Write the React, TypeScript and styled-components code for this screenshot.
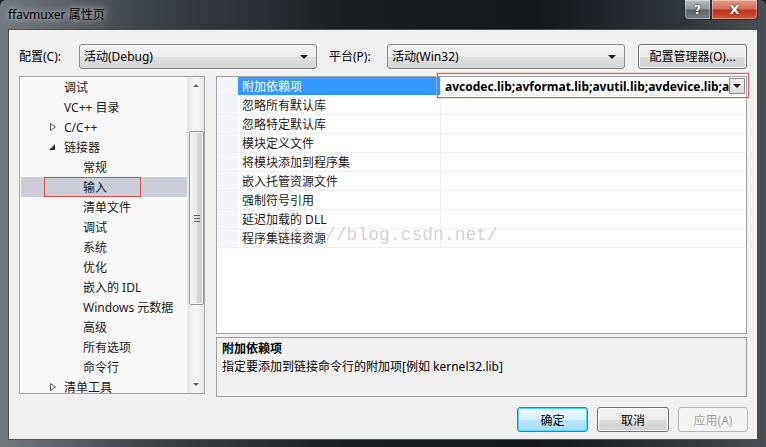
import React from 'react';
import styled, { createGlobalStyle } from 'styled-components';

const GlobalStyle = createGlobalStyle`
  html, body {
    margin: 0;
    padding: 0;
    background: #1c1f22;
    overflow: hidden;
  }
  * {
    box-sizing: border-box;
  }
`;

const UI_FONT = `"Noto Sans", "Noto Sans CJK SC", sans-serif`;

const Window = styled.div`
  position: relative;
  width: 766px;
  height: 447px;
  display: flex;
  flex-direction: column;
  font-family: ${UI_FONT};
  font-size: 12px;
  color: #000;
  background: linear-gradient(90deg, #737a80 0%, #41464b 18%, #1b1d20 45%, #15171a 70%, #2e3337 88%, #4a5055 100%);
  border-radius: 6px 6px 0 0;
  overflow: hidden;
`;

const TitleBar = styled.div`
  height: 29px;
  flex: none;
  display: flex;
  align-items: center;
  padding: 0 0 2px 8px;
`;

const TitleText = styled.span`
  font-size: 12px;
  color: #000;
  text-shadow: 0 0 6px #c8ccd0, 0 0 10px #b0b5ba;
`;

const TitleButtons = styled.div`
  position: absolute;
  top: 0;
  right: 8px;
  display: flex;
`;

const CaptionButton = styled.div<{ $close?: boolean }>`
  width: ${(p) => (p.$close ? '47px' : '27px')};
  height: 20px;
  display: flex;
  align-items: center;
  justify-content: center;
  color: #fff;
  font-family: "DejaVu Sans", sans-serif;
  font-weight: bold;
  font-size: ${(p) => (p.$close ? '13px' : '12px')};
  text-shadow: 0 0 2px #000;
  border: 1px solid #2a2e32;
  border-top: none;
  border-radius: ${(p) => (p.$close ? '0 0 5px 0' : '0 0 0 5px')};
  box-shadow: inset 0 0 0 1px rgba(255, 255, 255, 0.35);
  background: ${(p) =>
    p.$close
      ? 'linear-gradient(180deg, #e39b8b 0%, #d4705b 45%, #c0341f 55%, #d4553c 100%)'
      : 'linear-gradient(180deg, #b7bcc1 0%, #8f959a 45%, #5c6267 55%, #7c8287 100%)'};
`;

const Client = styled.div`
  flex: 1;
  margin: 0 8px 7px 8px;
  background: #f0f0f0;
  border: 1px solid #4b5054;
  display: flex;
  flex-direction: column;
  padding: 13px 10px 0 10px;
`;

const ConfigRow = styled.div`
  display: flex;
  align-items: center;
  height: 26px;
`;

const FieldLabel = styled.span<{ $w: number }>`
  width: ${(p) => p.$w}px;
  flex: none;
`;

const Combo = styled.div`
  width: 238px;
  height: 25px;
  flex: none;
  display: flex;
  align-items: center;
  justify-content: space-between;
  padding: 0 8px 0 4px;
  border: 1px solid #8a8a8a;
  border-radius: 3px;
  background: linear-gradient(180deg, #f4f4f4 0%, #ececec 50%, #dfdfdf 51%, #d6d6d6 100%);
`;

const ComboArrow = styled.span`
  width: 0;
  height: 0;
  border-left: 4px solid transparent;
  border-right: 4px solid transparent;
  border-top: 4px solid #1a1a1a;
  margin-top: 2px;
`;

const Spacer = styled.span<{ $w: number }>`
  width: ${(p) => p.$w}px;
  flex: none;
`;

const PushButton = styled.div<{ $w?: number; $focused?: boolean; $disabled?: boolean }>`
  width: ${(p) => p.$w ?? 72}px;
  height: 25px;
  flex: none;
  display: flex;
  align-items: center;
  justify-content: center;
  border-radius: 3px;
  color: ${(p) => (p.$disabled ? '#a0a0a0' : '#000')};
  border: 1px solid ${(p) => (p.$focused ? '#3c7fb1' : p.$disabled ? '#b5b5b5' : '#707070')};
  background: ${(p) =>
    p.$disabled
      ? '#f4f4f4'
      : p.$focused
      ? 'linear-gradient(180deg, #eaf6fd 0%, #d9f0fc 50%, #bee6fd 51%, #a7d9f5 100%)'
      : 'linear-gradient(180deg, #f2f2f2 0%, #ebebeb 50%, #dddddd 51%, #cfcfcf 100%)'};
  box-shadow: ${(p) => (p.$focused ? 'inset 0 0 0 1px #48d8fb' : p.$disabled ? 'none' : 'inset 0 0 0 1px #fcfcfc')};
`;

const MainArea = styled.div`
  display: flex;
  gap: 11px;
  margin-top: 7px;
  height: 320px;
`;

const Tree = styled.div`
  width: 186px;
  height: 318px;
  flex: none;
  display: flex;
  border: 1px solid #a6a6a6;
  background: #f8f8f8;
  overflow: hidden;
`;

const TreeList = styled.div`
  flex: 1;
  display: flex;
  flex-direction: column;
  overflow: hidden;
  padding-left: 1px;
`;

const TreeRow = styled.div<{ $level: number; $selected?: boolean }>`
  position: relative;
  height: 20px;
  flex: none;
  display: flex;
  align-items: center;
  padding-left: ${(p) => (p.$level === 1 ? 43 : 62)}px;
  background: ${(p) => (p.$selected ? '#cbcdd8' : 'transparent')};
  color: #1a1a1a;
`;

const Expander = styled.span<{ $open?: boolean }>`
  position: absolute;
  left: ${(p) => (p.$open ? 28 : 29)}px;
  top: 6px;
  width: 7px;
  height: 8px;
  display: flex;
`;

const MarkBox = styled.div`
  position: absolute;
  left: 23px;
  top: 0;
  width: 97px;
  height: 20px;
  border: 1px solid #e0453f;
`;

const VScroll = styled.div`
  width: 17px;
  flex: none;
  display: flex;
  flex-direction: column;
  align-items: center;
  background: linear-gradient(90deg, #e6e6e6, #f4f4f4 40%, #f4f4f4 60%, #e6e6e6);
  border-left: 1px solid #ececec;
`;

const ScrollArrow = styled.div<{ $down?: boolean }>`
  height: 17px;
  width: 100%;
  flex: none;
  display: flex;
  align-items: center;
  justify-content: center;
  &::after {
    content: '';
    width: 0;
    height: 0;
    border-left: 3px solid transparent;
    border-right: 3px solid transparent;
    ${(p) => (p.$down ? 'border-top: 3px solid #606060;' : 'border-bottom: 3px solid #606060;')}
  }
`;

const ScrollTrack = styled.div`
  flex: 1;
  width: 100%;
  display: flex;
  flex-direction: column;
  padding: 37px 1px 0 1px;
`;

const ScrollThumb = styled.div`
  height: 174px;
  width: 15px;
  border: 1px solid #979797;
  border-radius: 2px;
  background: linear-gradient(90deg, #f2f2f2 0%, #e9e9e9 50%, #d8d8d8 51%, #d0d0d0 100%);
  box-shadow: inset 0 0 0 1px #f8f8f8;
  display: flex;
  align-items: center;
  justify-content: center;
`;

const Grip = styled.div`
  width: 6px;
  height: 7px;
  background: repeating-linear-gradient(180deg, #5a5a5a 0 1px, transparent 1px 3px);
`;

const RightColumn = styled.div`
  flex: 1;
  display: flex;
  flex-direction: column;
  gap: 3px;
`;

const Grid = styled.div`
  position: relative;
  height: 258px;
  flex: none;
  border: 1px solid #a0a0a0;
  background: #fff;
  display: flex;
  flex-direction: column;
`;

const GridRow = styled.div`
  height: 19px;
  flex: none;
  display: grid;
  grid-template-columns: 21px 203px 1fr;
  border-bottom: 1px solid #f0f0f0;
`;

const Gutter = styled.div`
  background: #f3f5f9;
`;

const NameCell = styled.div<{ $selected?: boolean }>`
  display: flex;
  align-items: center;
  padding-left: 4px;
  background: ${(p) => (p.$selected ? '#3399ff' : 'transparent')};
  color: ${(p) => (p.$selected ? '#fff' : '#1a1a1a')};
  border-right: 1px solid #f0f0f0;
  white-space: nowrap;
`;

const ValueCell = styled.div`
  display: flex;
  align-items: center;
  padding-left: 4px;
  min-width: 0;
  overflow: hidden;
`;

const ValueText = styled.span`
  font-family: "Noto Sans", "Noto Sans CJK SC", sans-serif;
  font-weight: bold;
  font-size: 12px;
  white-space: nowrap;
  overflow: hidden;
  flex: 1;
  min-width: 0;
`;

const DropButton = styled.div`
  width: 16px;
  height: 16px;
  flex: none;
  margin-right: 1px;
  border: 1px solid #8c8c8c;
  background: linear-gradient(180deg, #f0f0f0, #dcdcdc);
  display: flex;
  align-items: center;
  justify-content: center;
  &::after {
    content: '';
    width: 0;
    height: 0;
    border-left: 4px solid transparent;
    border-right: 4px solid transparent;
    border-top: 4px solid #111;
  }
`;

const ValueMark = styled.div`
  position: absolute;
  left: 220px;
  top: -4px;
  width: 312px;
  height: 25px;
  border: 1px solid #d9606a;
  box-shadow: 0 0 0 1px rgba(240, 180, 180, 0.5);
  pointer-events: none;
`;

const Watermark = styled.div`
  position: absolute;
  left: 54px;
  top: 148px;
  font-family: "Liberation Mono", monospace;
  font-size: 18px;
  color: rgba(120, 120, 120, 0.35);
  white-space: nowrap;
  pointer-events: none;
`;

const Description = styled.div`
  height: 60px;
  flex: none;
  border: 1px solid #a0a0a0;
  background: #f0f0f0;
  padding: 2px 5px;
  display: flex;
  flex-direction: column;
  line-height: 18px;
`;

const DescTitle = styled.div`
  font-weight: bold;
`;

const ButtonRow = styled.div`
  display: flex;
  justify-content: flex-end;
  gap: 9px;
  margin-top: 11px;
  margin-right: -1px;
`;

type TreeItem = { label: string; level: number; expander?: 'open' | 'closed'; selected?: boolean };

const treeItems: TreeItem[] = [
  { label: '调试', level: 1 },
  { label: 'VC++ 目录', level: 1 },
  { label: 'C/C++', level: 1, expander: 'closed' },
  { label: '链接器', level: 1, expander: 'open' },
  { label: '常规', level: 2 },
  { label: '输入', level: 2, selected: true },
  { label: '清单文件', level: 2 },
  { label: '调试', level: 2 },
  { label: '系统', level: 2 },
  { label: '优化', level: 2 },
  { label: '嵌入的 IDL', level: 2 },
  { label: 'Windows 元数据', level: 2 },
  { label: '高级', level: 2 },
  { label: '所有选项', level: 2 },
  { label: '命令行', level: 2 },
  { label: '清单工具', level: 1, expander: 'closed' },
];

const properties = [
  '附加依赖项',
  '忽略所有默认库',
  '忽略特定默认库',
  '模块定义文件',
  '将模块添加到程序集',
  '嵌入托管资源文件',
  '强制符号引用',
  '延迟加载的 DLL',
  '程序集链接资源',
];

const ExpanderIcon: React.FC<{ open: boolean }> = ({ open }) => (
  <Expander $open={open}>
    {open ? (
      <svg width="7" height="8" viewBox="0 0 7 8">
        <polygon points="6,1 6,7 0,7" fill="#333" />
      </svg>
    ) : (
      <svg width="7" height="8" viewBox="0 0 7 8">
        <polygon points="0.5,0.5 5.5,4 0.5,7.5" fill="none" stroke="#555" strokeWidth="1" />
      </svg>
    )}
  </Expander>
);

const App: React.FC = () => (
  <Window>
    <GlobalStyle />
    <TitleBar>
      <TitleText>ffavmuxer 属性页</TitleText>
    </TitleBar>
    <TitleButtons>
      <CaptionButton>?</CaptionButton>
      <CaptionButton $close>X</CaptionButton>
    </TitleButtons>
    <Client>
      <ConfigRow>
        <FieldLabel $w={60}>配置(C):</FieldLabel>
        <Combo>
          <span>活动(Debug)</span>
          <ComboArrow />
        </Combo>
        <Spacer $w={12} />
        <FieldLabel $w={58}>平台(P):</FieldLabel>
        <Combo>
          <span>活动(Win32)</span>
          <ComboArrow />
        </Combo>
        <Spacer $w={13} />
        <PushButton $w={109}>配置管理器(O)...</PushButton>
      </ConfigRow>
      <MainArea>
        <Tree>
          <TreeList>
            {treeItems.map((item, i) => (
              <TreeRow key={i} $level={item.level} $selected={item.selected}>
                {item.expander && <ExpanderIcon open={item.expander === 'open'} />}
                {item.selected && <MarkBox />}
                {item.label}
              </TreeRow>
            ))}
          </TreeList>
          <VScroll>
            <ScrollArrow />
            <ScrollTrack>
              <ScrollThumb>
                <Grip />
              </ScrollThumb>
            </ScrollTrack>
            <ScrollArrow $down />
          </VScroll>
        </Tree>
        <RightColumn>
          <Grid>
            {properties.map((name, i) => (
              <GridRow key={name}>
                <Gutter />
                <NameCell $selected={i === 0}>{name}</NameCell>
                <ValueCell>
                  {i === 0 && (
                    <>
                      <ValueText>avcodec.lib;avformat.lib;avutil.lib;avdevice.lib;avfilter.lib</ValueText>
                      <DropButton />
                    </>
                  )}
                </ValueCell>
              </GridRow>
            ))}
            <ValueMark />
            <Watermark>http://blog.csdn.net/</Watermark>
          </Grid>
          <Description>
            <DescTitle>附加依赖项</DescTitle>
            <div>指定要添加到链接命令行的附加项[例如 kernel32.lib]</div>
          </Description>
        </RightColumn>
      </MainArea>
      <ButtonRow>
        <PushButton $w={71} $focused>确定</PushButton>
        <PushButton $w={72}>取消</PushButton>
        <PushButton $w={70} $disabled>应用(A)</PushButton>
      </ButtonRow>
    </Client>
  </Window>
);

export default App;
